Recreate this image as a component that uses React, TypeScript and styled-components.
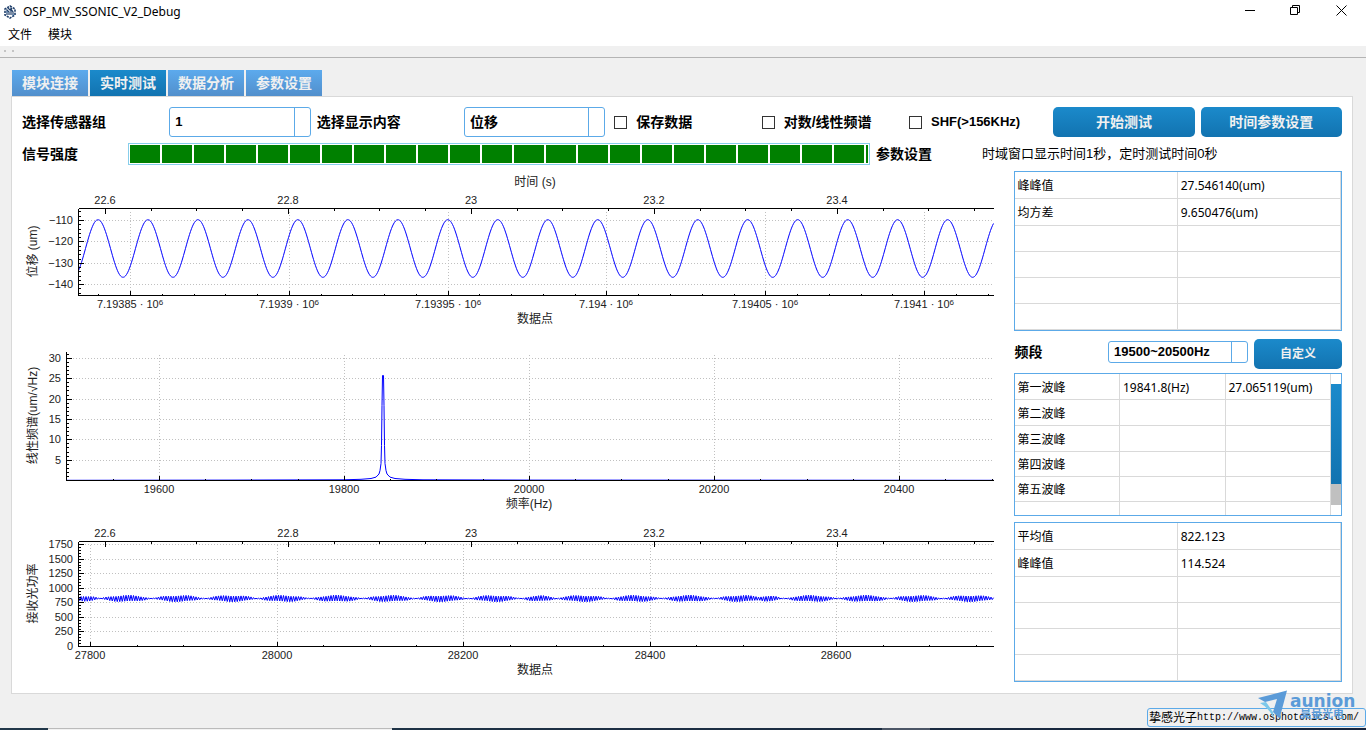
import React, { useLayoutEffect, useRef, useState } from 'react';
import styled, { createGlobalStyle } from 'styled-components';

const ui = '"Noto Sans", "Noto Sans CJK SC", sans-serif';
const cjk = '"Liberation Sans", "Noto Sans CJK SC", sans-serif';
const blue = '#5caae8';
const line = '#d9d9d9';

const GlobalStyle = createGlobalStyle`
  * { box-sizing: border-box; }
  body {
    margin: 0;
    background: #f0f0f0;
    color: #000;
    font: 12px/16px ${ui};
  }
  button, select, input { font: inherit; color: inherit; margin: 0; }
`;

const Window = styled.div`
  display: flex;
  flex-direction: column;
  min-height: 100vh;
`;

const TitleBar = styled.header`
  display: flex;
  align-items: center;
  height: 24px;
  padding: 0 2px 0 3px;
  background: #fff;
`;

const WindowTitle = styled.h1`
  flex: 1;
  margin: 0 0 0 6px;
  font-size: 12px;
  font-weight: 400;
`;

const WindowButton = styled.button`
  display: grid;
  place-items: center;
  align-self: flex-start;
  width: 46px;
  height: 20px;
  padding: 0;
  border: 0;
  background: none;
`;

const MenuBar = styled.nav`
  display: flex;
  gap: 16px;
  height: 23px;
  padding: 2px 8px 0;
  background: #fff;
  border-bottom: 1px solid #f0f0f0;
`;

const MenuButton = styled.button`
  height: 18px;
  padding: 0;
  border: 0;
  background: none;
`;

const ToolStrip = styled.div`
  display: flex;
  gap: 6px;
  height: 11px;
  padding: 3px 4px;
  color: #c4c4c4;
  border-bottom: 1px solid #b4b4b4;
`;

const Grip = styled.span`
  width: 2px;
  height: 2px;
  background: currentColor;
`;

const Content = styled.main`
  flex: 1;
  padding: 12px 13px 14px 11px;
`;

const Tabs = styled.div`
  display: flex;
  gap: 2px;
  padding-left: 1px;
`;

const Tab = styled.button<{ $active?: boolean }>`
  width: 76px;
  height: 26px;
  padding: 0;
  border: 0;
  color: #f0f0f0;
  font: 700 14px/26px ${cjk};
  background: ${(p) =>
    p.$active
      ? 'linear-gradient(#1b8acb, #1273b0)'
      : 'linear-gradient(#5caaed, #528fcc)'};
`;

const Panel = styled.section`
  display: flex;
  flex-direction: column;
  gap: 6px;
  padding: 10px 10px 11px;
  background: #fff;
  border: 1px solid ${line};
`;

const ControlRow = styled.div`
  display: grid;
  grid-template-columns: repeat(9, minmax(0, 1fr));
  gap: 6px;
  align-items: center;
`;

const SignalRow = styled.div`
  display: grid;
  grid-template-columns: 100px minmax(0, 742fr) 100px minmax(0, 360fr);
  gap: 6px;
  align-items: center;
`;

const FieldLabel = styled.label`
  font: 700 14px/20px ${cjk};
  white-space: nowrap;
`;

const Combo = styled.select<{ $small?: boolean; $latin?: boolean }>`
  appearance: none;
  width: ${(p) => (p.$small ? '140px' : '100%')};
  height: ${(p) => (p.$small ? '22px' : '30px')};
  padding: 0 20px 0 5px;
  border: 1px solid ${blue};
  border-radius: 3px;
  background: linear-gradient(${blue}, ${blue}) right 15px top 0 / 1px 100%
    no-repeat #fff;
  font: 700 ${(p) => (p.$latin ? '13px' : '14px')} / 20px ${cjk};
`;

const CheckLabel = styled.label`
  display: flex;
  align-items: center;
  gap: 9px;
  padding-left: 3px;
  font: 700 14px/20px ${cjk};
  white-space: nowrap;
`;

const LatinText = styled.span`
  font-size: 13px;
`;

const CheckBox = styled.input`
  appearance: none;
  flex: none;
  width: 13px;
  height: 13px;
  border: 1px solid #333;
  background: #fff;
  &:checked { background: #1780c0; }
`;

const PrimaryButton = styled.button<{ $compact?: boolean }>`
  width: ${(p) => (p.$compact ? '88px' : '100%')};
  height: 30px;
  padding: 0;
  border: 0;
  border-radius: 5px;
  color: #f0f0f0;
  background: linear-gradient(#1b8acb, #1273b0);
  font: 700 ${(p) => (p.$compact ? '12px' : '14px')} / 30px ${cjk};
`;

const SignalBar = styled.div`
  height: 22px;
  padding: 1px;
  border: 1px solid #87ceeb;
`;

const SignalFill = styled.div`
  height: 18px;
  background: repeating-linear-gradient(
    to right,
    #008000 0 30px,
    #fff 30px 32px
  );
`;

const Notice = styled.p`
  margin: 0;
  font: 13px/20px ${cjk};
`;

const Body = styled.div`
  display: grid;
  grid-template-columns: minmax(0, 3fr) minmax(0, 1fr);
  gap: 6px;
`;

const Charts = styled.div`
  display: flex;
  flex-direction: column;
`;

const ChartSvg = styled.svg`
  display: block;
  width: 100%;
  font: 11px ${cjk};
  fill: #222;
`;

const Side = styled.aside`
  display: flex;
  flex-direction: column;
`;

const TableFrame = styled.div`
  display: flex;
  border: 1px solid ${blue};
`;

const DataTable = styled.table`
  flex: 1;
  width: 100%;
  min-width: 0;
  table-layout: fixed;
  border-spacing: 0;
  th, td {
    padding: 2px 3px 0;
    border-right: 1px solid ${line};
    border-bottom: 1px solid ${line};
    font-weight: 400;
    text-align: left;
    line-height: 16px;
    white-space: nowrap;
  }
`;

const Row = styled.tr<{ $h: number }>`
  height: ${(p) => p.$h}px;
  &:last-child > * { border-bottom-width: ${(p) => (p.$h < 20 ? 0 : 1)}px; }
`;

const BandRow = styled.div`
  display: flex;
  gap: 6px;
  margin: 8px 0 4px;
`;

const BandField = styled.div`
  display: flex;
  flex: 1;
  align-items: center;
  justify-content: space-between;
  height: 26px;
  padding-left: 1px;
`;

const PeakFrame = styled(TableFrame)`
  margin-bottom: 6px;
`;

const ScrollTrack = styled.div`
  flex: none;
  width: 10px;
  padding: 10px 0;
`;

const ScrollGroove = styled.div`
  height: 121px;
  background: #c0c0c0;
`;

const ScrollThumb = styled.div`
  height: 100px;
  background: linear-gradient(#1b8acb, #1273b0);
`;

const StatusBar = styled.footer`
  position: relative;
  display: flex;
  justify-content: flex-end;
  height: 20px;
`;

const SiteLink = styled.a`
  display: flex;
  align-items: center;
  width: 219px;
  height: 19px;
  padding-left: 1px;
  border: 1px solid ${blue};
  border-radius: 3px;
  color: #000;
  text-decoration: none;
  font: 12px/16px ${cjk};
  white-space: nowrap;
`;

const Url = styled.span`
  font: 10px/16px "Liberation Mono", monospace;
`;

const Watermark = styled.svg`
  position: absolute;
  right: 6px;
  bottom: 8px;
  pointer-events: none;
`;

const TaskStrip = styled.div`
  display: flex;
  height: 2px;
  background: linear-gradient(to right, #22384a, #16243c);
`;

const TaskSearch = styled.div`
  width: 344px;
  margin-left: 48px;
  background: #f2f2f2;
  border-top: 1px solid #bbb;
`;

const TaskActive = styled.div`
  width: 48px;
  margin-left: 490px;
  background: #4c5666;
`;

function useWidth(initial: number) {
  const ref = useRef<SVGSVGElement>(null);
  const [width, setWidth] = useState(initial);
  useLayoutEffect(() => {
    const el = ref.current;
    if (!el) return;
    const measure = () => setWidth(Math.floor(el.getBoundingClientRect().width));
    measure();
    const observer = new ResizeObserver(measure);
    observer.observe(el);
    return () => observer.disconnect();
  }, []);
  return [ref, width] as const;
}

type Label = string | { base: string; exp: string };

interface XAxis {
  min: number;
  max: number;
  start: number;
  step: number;
  minor: number;
  labels: Label[];
}

interface YAxis {
  zero: number;
  start: number;
  step: number;
  px: number;
  count: number;
}

interface ChartProps {
  name: string;
  height: number;
  left: number;
  top: number;
  bottom: number;
  bottomAxis: XAxis;
  topAxis?: XAxis;
  y: YAxis;
  yTitle: string;
  xTitle: string;
  topTitle?: string;
  trace: (right: number) => string;
}

function Chart(props: ChartProps) {
  const { name, height, left, top, bottom, bottomAxis, topAxis, y } = props;
  const [ref, width] = useWidth(985);
  const right = width - 14;
  const mid = Math.round((left + right) / 2) - 1;

  const toX = (a: XAxis, v: number) =>
    Math.round(left + ((v - a.min) / (a.max - a.min)) * (right - left));

  const minorTicks = (a: XAxis, edge: number, dir: number) => {
    let d = '';
    const step = a.step / a.minor;
    for (let k = -a.minor; k < a.labels.length * a.minor; k++) {
      const v = a.start + k * step;
      if (v < a.min || v > a.max) continue;
      const len = k % a.minor === 0 ? 5 : 2;
      d += `M${toX(a, v)} ${edge}v${len * dir}`;
    }
    return d;
  };

  const yPos = (k: number) => Math.round(y.zero - k * y.px);
  let yTicks = '';
  for (let k = -5; k < y.count * 5; k++) {
    const py = Math.round(y.zero - (k * y.px) / 5);
    if (py <= top || py >= bottom) continue;
    yTicks += `M${left} ${py}h${k % 5 === 0 ? 5 : 2}`;
  }

  const majors = Array.from({ length: y.count }, (_, k) => k);

  return (
    <ChartSvg ref={ref} height={height} role="img" aria-label={name}>
      <g transform="translate(.5 .5)" fill="none">
        <g stroke="#c0c0c0" strokeDasharray="1 2" shapeRendering="crispEdges">
          {majors.map((k) => (
            <path key={k} d={`M${left} ${yPos(k)}H${right}`} />
          ))}
          {bottomAxis.labels.map((_, k) => (
            <path
              key={k}
              d={`M${toX(bottomAxis, bottomAxis.start + k * bottomAxis.step)} ${top + 3}V${bottom}`}
            />
          ))}
        </g>
        <path d={props.trace(right)} stroke="#0000ff" strokeLinejoin="bevel" />
        <path
          stroke="#000"
          shapeRendering="crispEdges"
          d={
            `M${left} ${top}V${bottom}H${right}` +
            yTicks +
            minorTicks(bottomAxis, bottom, -1) +
            (topAxis ? `M${left} ${top}H${right}` + minorTicks(topAxis, top, 1) : '')
          }
        />
      </g>
      {majors.map((k) => (
        <text key={k} x={left - 5} y={yPos(k) + 4} textAnchor="end">
          {String(y.start + k * y.step).replace('-', '−')}
        </text>
      ))}
      {bottomAxis.labels.map((label, k) => (
        <text
          key={k}
          x={toX(bottomAxis, bottomAxis.start + k * bottomAxis.step)}
          y={bottom + 13}
          textAnchor="middle"
        >
          {typeof label === 'string' ? (
            label
          ) : (
            <>
              {label.base}
              <tspan fontSize="8" dy="-3">
                {label.exp}
              </tspan>
            </>
          )}
        </text>
      ))}
      {topAxis?.labels.map((label, k) => (
        <text
          key={k}
          x={toX(topAxis, topAxis.start + k * topAxis.step)}
          y={top - 4}
          textAnchor="middle"
        >
          {label as string}
        </text>
      ))}
      {props.topTitle && (
        <text x={mid} y={top - 22} textAnchor="middle" fontSize="12">
          {props.topTitle}
        </text>
      )}
      <text x={mid} y={bottom + 28} textAnchor="middle" fontSize="12">
        {props.xTitle}
      </text>
      <text
        transform={`translate(15 ${(top + bottom) / 2}) rotate(-90)`}
        textAnchor="middle"
        fontSize="12"
      >
        {props.yTitle}
      </text>
    </ChartSvg>
  );
}

const timeAxis: XAxis = {
  min: 22.5705,
  max: 23.5705,
  start: 22.6,
  step: 0.2,
  minor: 4,
  labels: ['22.6', '22.8', '23', '23.2', '23.4'],
};

function sineTrace(right: number) {
  const left = 56;
  const scale = (right - left) / 915;
  const pts: string[] = [];
  for (let i = 0; i <= 915; i += 1) {
    const v = 77 - 28.8 * Math.cos(((i - 19.5) / 49.98) * 2 * Math.PI);
    pts.push(`${(left + i * scale).toFixed(1)} ${v.toFixed(1)}`);
  }
  return 'M' + pts.join('L');
}

function spectrumTrace(right: number) {
  const left = 44;
  const scale = (right - left) / 927;
  const side: [number, number][] = [
    [150, 144.6], [40, 144.3], [22, 143.8], [12, 143], [7, 141.6],
    [4, 138.5], [3, 135], [2, 128], [1.5, 110], [1, 70], [0.5, 40],
  ];
  const peak = left + 316.5 * scale;
  const a = side.map(([dx, py]) => `${(peak - dx).toFixed(1)} ${py}`);
  const b = side.map(([dx, py]) => `${(peak + dx).toFixed(1)} ${py}`).reverse();
  return `M${left} 144.8L${a.join('L')}L${b.join('L')}L${right} 144.8`;
}

/* centre, half width and height of every beat in the received power */
const beats: [number, number, number][] = [
  [7, 14, 2.8], [47, 25, 3.4], [100, 25, 3.4], [153, 25, 3.4], [205, 25, 3.4],
  [258, 25, 3.4], [311, 25, 3.4], [363, 25, 3.4], [416, 24, 3.4], [461, 17, 3],
  [504, 25, 3.4], [557, 25, 3.4], [610, 25, 3.4], [662, 24, 3.4], [690, 13, 3],
  [733, 25, 3.4], [786, 25, 3.4], [838, 25, 3.4], [892, 26, 3.4],
];

function powerTrace(right: number) {
  const left = 56;
  const scale = (right - left) / 915;
  const pts: string[] = [];
  for (let n = 0; n <= 732; n += 1) {
    const i = n * 1.25;
    let amp = 0.4;
    for (const [c, hw, h] of beats) {
      const t = Math.abs(i - c) / hw;
      if (t < 1) amp = Math.max(amp, h * Math.pow(1 - t * t, 0.8));
    }
    const wobble = 0.85 + 0.15 * Math.sin(i * 2.3);
    const v = 80 + (n % 2 ? 1 : -1) * amp * wobble;
    pts.push(`${(left + i * scale).toFixed(2)} ${v.toFixed(1)}`);
  }
  return 'M' + pts.join('L');
}

const pointLabels = ['7.19385', '7.1939', '7.19395', '7.194', '7.19405', '7.1941'];

function ValueTable({ caption, rows }: { caption: string; rows: [string, string][] }) {
  const heights = [27, 27, 26, 26, 26, 26];
  return (
    <TableFrame>
      <DataTable aria-label={caption}>
        <tbody>
          {heights.map((h, i) => (
            <Row key={i} $h={h}>
              <th scope="row">{rows[i]?.[0]}</th>
              <td>{rows[i]?.[1]}</td>
            </Row>
          ))}
        </tbody>
      </DataTable>
    </TableFrame>
  );
}

const peakRows: { h: number; cells: [string, string, string] }[] = [
  { h: 26, cells: ['第一波峰', '19841.8(Hz)', '27.065119(um)'] },
  { h: 26, cells: ['第二波峰', '', ''] },
  { h: 26, cells: ['第三波峰', '', ''] },
  { h: 25, cells: ['第四波峰', '', ''] },
  { h: 25, cells: ['第五波峰', '', ''] },
  { h: 13, cells: ['', '', ''] },
];

function AppIcon() {
  return (
    <svg width="14" height="14" viewBox="0 0 14 14" fill="none" stroke="#1f3f6b" aria-hidden="true">
      <path d="M7 1L12 4V10L7 13L2 10V4Z" strokeWidth="1.6" strokeDasharray="2.2 1" />
      <path d="M4 10V5l2 2v3M8 10V4l2 3v3M5 3l2 2 2-2" strokeWidth="1.2" />
      <path d="M3 7h2M9 11l2-2" stroke="#6c93bd" />
    </svg>
  );
}

export default function App() {
  const [tab, setTab] = useState(1);
  return (
    <>
      <GlobalStyle />
      <Window>
        <TitleBar>
          <AppIcon />
          <WindowTitle>OSP_MV_SSONIC_V2_Debug</WindowTitle>
          <WindowButton aria-label="最小化">
            <svg width="11" height="11" stroke="#000" fill="none" aria-hidden="true">
              <path d="M1 5.500h10" />
            </svg>
          </WindowButton>
          <WindowButton aria-label="还原">
            <svg width="11" height="11" stroke="#000" fill="none" aria-hidden="true">
              <path d="M.5 2.5h7v7h-7zM2.5 2.5v-2h7v7h-2" />
            </svg>
          </WindowButton>
          <WindowButton aria-label="关闭">
            <svg width="11" height="11" stroke="#000" fill="none" aria-hidden="true">
              <path d="M.5 .5l10 10M10.500 .5l-10 10" />
            </svg>
          </WindowButton>
        </TitleBar>
        <MenuBar>
          <MenuButton>文件</MenuButton>
          <MenuButton>模块</MenuButton>
        </MenuBar>
        <ToolStrip>
          <Grip />
          <Grip />
        </ToolStrip>

        <Content>
          <Tabs role="tablist">
            {['模块连接', '实时测试', '数据分析', '参数设置'].map((name, i) => (
              <Tab
                key={name}
                role="tab"
                aria-selected={tab === i}
                $active={tab === i}
                onClick={() => setTab(i)}
              >
                {name}
              </Tab>
            ))}
          </Tabs>

          <Panel>
            <ControlRow>
              <FieldLabel htmlFor="group">选择传感器组</FieldLabel>
              <Combo id="group" $latin>
                <option>1</option>
              </Combo>
              <FieldLabel htmlFor="content">选择显示内容</FieldLabel>
              <Combo id="content">
                <option>位移</option>
              </Combo>
              <CheckLabel>
                <CheckBox type="checkbox" />
                保存数据
              </CheckLabel>
              <CheckLabel>
                <CheckBox type="checkbox" />
                对数/线性频谱
              </CheckLabel>
              <CheckLabel>
                <CheckBox type="checkbox" />
                <LatinText>SHF(&gt;156KHz)</LatinText>
              </CheckLabel>
              <PrimaryButton>开始测试</PrimaryButton>
              <PrimaryButton>时间参数设置</PrimaryButton>
            </ControlRow>

            <SignalRow>
              <FieldLabel as="span" id="signal">信号强度</FieldLabel>
              <SignalBar
                role="progressbar"
                aria-labelledby="signal"
                aria-valuenow={100}
              >
                <SignalFill />
              </SignalBar>
              <FieldLabel as="span">参数设置</FieldLabel>
              <Notice>时域窗口显示时间1秒，定时测试时间0秒</Notice>
            </SignalRow>

            <Body>
              <Charts>
                <Chart
                  name="位移"
                  height={164}
                  left={56}
                  top={37}
                  bottom={124}
                  topAxis={timeAxis}
                  bottomAxis={{
                    min: 7193833.6,
                    max: 7194121.7,
                    start: 7193850,
                    step: 50,
                    minor: 5,
                    labels: pointLabels.map((n) => ({ base: `${n} · 10`, exp: '6' })),
                  }}
                  y={{ zero: 113.2, start: -140, step: 10, px: 21.4, count: 4 }}
                  topTitle="时间 (s)"
                  xTitle="数据点"
                  yTitle="位移 (um)"
                  trace={sineTrace}
                />
                <Chart
                  name="线性频谱"
                  height={183}
                  left={44}
                  top={16}
                  bottom={145}
                  bottomAxis={{
                    min: 19499.5,
                    max: 20501.6,
                    start: 19600,
                    step: 200,
                    minor: 4,
                    labels: ['19600', '19800', '20000', '20200', '20400'],
                  }}
                  y={{ zero: 124.7, start: 5, step: 5, px: 20.37, count: 6 }}
                  xTitle="频率(Hz)"
                  yTitle="线性频谱(um/√Hz)"
                  trace={spectrumTrace}
                />
                <Chart
                  name="接收光功率"
                  height={164}
                  left={56}
                  top={23}
                  bottom={128}
                  topAxis={timeAxis}
                  bottomAxis={{
                    min: 27787.1,
                    max: 28768.3,
                    start: 27800,
                    step: 200,
                    minor: 4,
                    labels: ['27800', '28000', '28200', '28400', '28600'],
                  }}
                  y={{ zero: 128, start: 0, step: 250, px: 14.55, count: 8 }}
                  xTitle="数据点"
                  yTitle="接收光功率"
                  trace={powerTrace}
                />
              </Charts>

              <Side>
                <ValueTable
                  caption="位移统计"
                  rows={[
                    ['峰峰值', '27.546140(um)'],
                    ['均方差', '9.650476(um)'],
                  ]}
                />
                <BandRow>
                  <BandField>
                    <FieldLabel htmlFor="band">频段</FieldLabel>
                    <Combo id="band" $small $latin>
                      <option>19500~20500Hz</option>
                    </Combo>
                  </BandField>
                  <PrimaryButton $compact>自定义</PrimaryButton>
                </BandRow>
                <PeakFrame>
                  <DataTable aria-label="波峰">
                    <tbody>
                      {peakRows.map(({ h, cells }, i) => (
                        <Row key={i} $h={h}>
                          <th scope="row">{cells[0]}</th>
                          <td>{cells[1]}</td>
                          <td>{cells[2]}</td>
                        </Row>
                      ))}
                    </tbody>
                  </DataTable>
                  <ScrollTrack aria-hidden="true">
                    <ScrollGroove>
                      <ScrollThumb />
                    </ScrollGroove>
                  </ScrollTrack>
                </PeakFrame>
                <ValueTable
                  caption="功率统计"
                  rows={[
                    ['平均值', '822.123'],
                    ['峰峰值', '114.524'],
                  ]}
                />
              </Side>
            </Body>
          </Panel>
        </Content>

        <StatusBar>
          <SiteLink href="http://www.osphotonics.com/">
            挚感光子<Url>http://www.osphotonics.com/</Url>
          </SiteLink>
          <Watermark width="102" height="32" viewBox="0 0 102 32" aria-hidden="true">
            <path d="M0 10L29 2.500L21.500 30.500L15 24L19 11L7 14z" fill="#5b9bd8" />
            <path d="M2 15L8 14L15 24L15.500 30.500Q12 21 2 15z" fill="#7cc8ea" />
            <text x="32" y="19" fontFamily="DejaVu Sans" fontWeight="700" fontSize="17" fill="#5b9bd8">
              aunion
            </text>
            <text x="42" y="30" fontFamily="Noto Sans CJK SC" fontWeight="700" fontSize="11" fill="#5b9bd8">
              昊量光电
            </text>
          </Watermark>
        </StatusBar>
        <TaskStrip>
          <TaskSearch />
          <TaskActive />
        </TaskStrip>
      </Window>
    </>
  );
}
